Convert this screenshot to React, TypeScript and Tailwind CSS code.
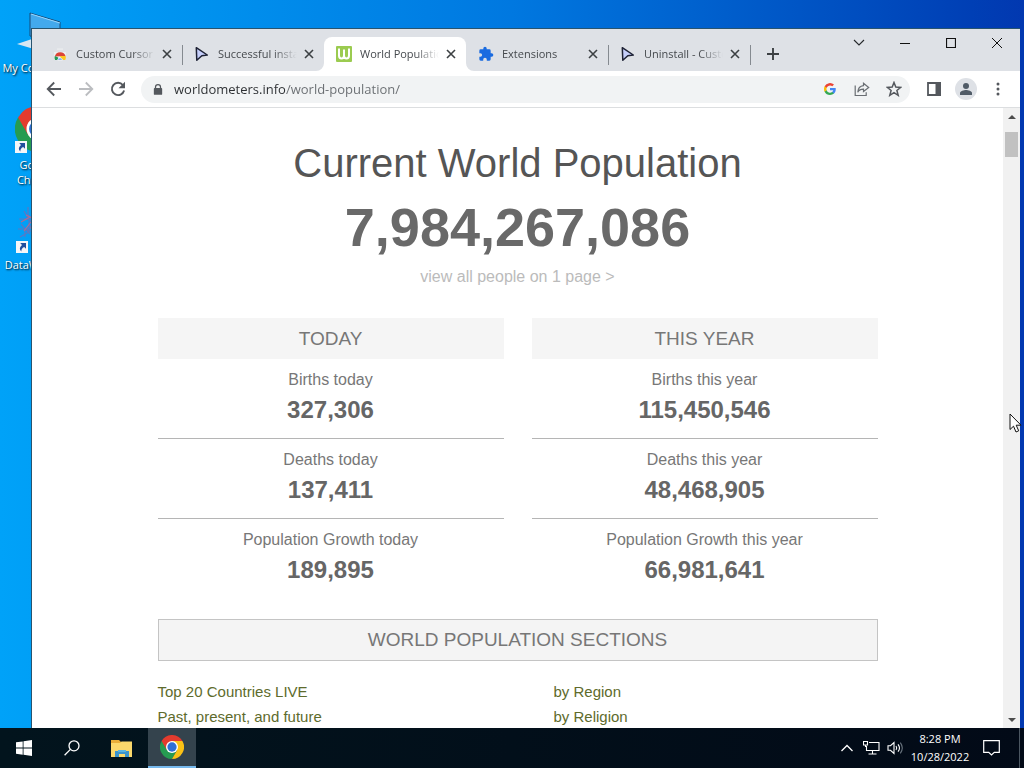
import type { ReactNode } from "react";

function ChromeLogo({ className }: { className: string }) {
  return (
    <svg viewBox="0 0 48 48" className={className} aria-hidden="true">
      <path d="M3.2 12A24 24 0 0 0 24 48L34.4 30 24 24Z" fill="#269b51" />
      <path d="M24 12H44.8A24 24 0 0 1 24 48L34.4 30Z" fill="#fbc116" />
      <path d="M3.2 12 13.6 30 24 24 24 12 44.8 12A24 24 0 0 0 3.2 12Z" fill="#e33b2e" />
      <circle cx="24" cy="24" r="12" fill="#fff" />
      <circle cx="24" cy="24" r="9.3" fill="#2f6fd6" />
    </svg>
  );
}

function StoreIcon() {
  return (
    <svg viewBox="0 0 16 16" className="h-4 w-4 shrink-0">
      <path d="M5 2.500h6v1.200H5z" fill="#eceef0" />
      <path d="M2 6h12v8H2z" fill="#eceef0" />
      <path d="M2.800 10.500A5.600 5.600 0 0 1 13.600 10.300H8Z" fill="#dc4437" />
      <path d="M2.800 10A5.600 5.600 0 0 0 3 14H6.200V11.500Z" fill="#249a55" />
      <path d="M8 10h5.600a5.600 5.600 0 0 1-.2 4H9.600Z" fill="#fbc722" />
      <path d="M5.600 14a2.500 2.500 0 0 1 4.900 0Z" fill="#4285f4" stroke="#fff" strokeWidth=".7" />
    </svg>
  );
}

function PointerIcon() {
  return (
    <svg viewBox="0 0 16 16" className="h-4 w-4 shrink-0">
      <path d="M2.300 1.700 13.300 9 7.800 9.700 2.800 14.300Z" fill="#c5cefa" stroke="#1d2134" strokeWidth="1.500" strokeLinejoin="round" />
    </svg>
  );
}

function WorldometerIcon() {
  return (
    <svg viewBox="0 0 16 16" className="h-4 w-4 shrink-0">
      <rect width="16" height="16" rx="1" fill="#9bcb50" />
      <path d="M3 2.500v7q0 3 2.500 3T8 9.500V3.500v6q0 3 2.500 3T13 9.500v-7" fill="none" stroke="#fff" strokeWidth="2" />
    </svg>
  );
}

function PuzzleIcon() {
  return (
    <svg viewBox="0 0 24 24" className="h-4 w-4 shrink-0">
      <path
        fill="#1a6be0"
        d="M20.500 11H19V7a2 2 0 0 0-2-2h-4V3.500a2.500 2.500 0 0 0-5 0V5H4a2 2 0 0 0-2 2v3.800h1.500a2.700 2.700 0 0 1 0 5.400H2V20a2 2 0 0 0 2 2h3.800v-1.500a2.700 2.700 0 0 1 5.400 0V22H17a2 2 0 0 0 2-2v-4h1.500a2.500 2.500 0 0 0 0-5Z"
      />
    </svg>
  );
}

type TabInfo = { title: string; icon: ReactNode; active?: boolean; divider?: boolean };

const tabs: TabInfo[] = [
  { title: "Custom Cursor", icon: <StoreIcon />, divider: true },
  { title: "Successful installation", icon: <PointerIcon /> },
  { title: "World Population Clock", icon: <WorldometerIcon />, active: true },
  { title: "Extensions", icon: <PuzzleIcon />, divider: true },
  { title: "Uninstall - Custom Cursor", icon: <PointerIcon />, divider: true },
];

function Tab({ title, icon, active, divider }: TabInfo) {
  return (
    <div className={active ? "relative flex h-[34px] w-[142px] items-center rounded-t-lg bg-white pr-[7px] pl-3" : "relative flex h-[34px] w-[142px] items-center pr-[7px] pl-3"}>
      {active && (
        <>
          <svg viewBox="0 0 8 8" className="absolute bottom-0 -left-2 h-2 w-2"><path d="M8 0v8H0a8 8 0 0 0 8-8" fill="#fff" /></svg>
          <svg viewBox="0 0 8 8" className="absolute -right-2 bottom-0 h-2 w-2"><path d="M0 0v8h8a8 8 0 0 1-8-8" fill="#fff" /></svg>
        </>
      )}
      {icon}
      <button className="ml-2 min-w-0 flex-1 overflow-hidden mask-r-from-70% text-left text-[11px] leading-4 whitespace-nowrap text-[#45494d]">{title}</button>
      <button aria-label={`Close ${title}`} className="ml-1 flex h-4 w-4 shrink-0 items-center justify-center">
        <svg viewBox="0 0 10 10" className="h-[10px] w-[10px]"><path d="m1 1 8 8M9 1 1 9" stroke="#3c4043" strokeWidth="1.600" /></svg>
      </button>
      {divider && <span className="absolute top-2 -right-px h-5 w-px bg-[#858a90]" />}
    </div>
  );
}

function TabStrip() {
  return (
    <div className="flex h-[42px] shrink-0 items-end bg-[#dee1e6] pl-2">
      {tabs.map((t) => <Tab key={t.title} {...t} />)}
      <button aria-label="New tab" className="ml-2 flex h-[34px] w-[30px] items-center justify-center">
        <svg viewBox="0 0 12 12" className="h-3 w-3"><path d="M6 0v12M0 6h12" stroke="#3c4043" strokeWidth="1.900" /></svg>
      </button>
      <div className="ml-auto flex h-full items-start">
        <button aria-label="Search tabs" className="flex h-7 w-[46px] items-center justify-center">
          <svg viewBox="0 0 12 12" className="h-3 w-3"><path d="m1 3 5 5 5-5" fill="none" stroke="#25282b" strokeWidth="1.100" /></svg>
        </button>
        <button aria-label="Minimize" className="flex h-7 w-[46px] items-center justify-center">
          <svg viewBox="0 0 10 10" className="h-[10px] w-[10px]"><path d="M0 5.500h10" stroke="#111" strokeWidth="1" /></svg>
        </button>
        <button aria-label="Maximize" className="flex h-7 w-[46px] items-center justify-center">
          <svg viewBox="0 0 10 10" className="h-[10px] w-[10px]"><path d="M.5.5h9v9h-9z" fill="none" stroke="#111" strokeWidth="1.200" /></svg>
        </button>
        <button aria-label="Close window" className="flex h-7 w-[46px] items-center justify-center">
          <svg viewBox="0 0 10 10" className="h-[10px] w-[10px]"><path d="m0 0 10 10M10 0 0 10" stroke="#111" strokeWidth="1" /></svg>
        </button>
      </div>
    </div>
  );
}

const iconButton = "flex h-7 w-8 shrink-0 items-center justify-center";

function Toolbar() {
  return (
    <div className="flex h-[37px] shrink-0 items-center border-b border-[#dcdee0] bg-white px-[6px]">
      <button aria-label="Back" className={iconButton}>
        <svg viewBox="0 0 16 16" className="h-4 w-4"><path d="M15 8H2M8.200 1.500 1.700 8l6.500 6.500" fill="none" stroke="#54585d" strokeWidth="1.800" /></svg>
      </button>
      <button aria-label="Forward" className={iconButton}>
        <svg viewBox="0 0 16 16" className="h-4 w-4"><path d="M1 8h13M7.800 1.500 14.300 8l-6.500 6.500" fill="none" stroke="#bbbdc0" strokeWidth="1.800" /></svg>
      </button>
      <button aria-label="Reload" className={iconButton}>
        <svg viewBox="0 0 16 16" className="h-4 w-4">
          <path d="M12.900 4A6.200 6.200 0 1 0 14.100 9.500" fill="none" stroke="#54585d" strokeWidth="1.900" />
          <path d="M15 .8v6.500H8.500Z" fill="#54585d" />
        </svg>
      </button>
      <div className="ml-[7px] flex h-[27px] min-w-0 flex-1 items-center rounded-full bg-[#f1f3f4] pl-3">
        <svg viewBox="0 0 12 14" className="h-[13px] w-[10px] shrink-0">
          <path d="M3 6V4a3 3 0 0 1 6 0v2" fill="none" stroke="#54585d" strokeWidth="1.500" />
          <rect x="1" y="5.300" width="10" height="8" rx="1" fill="#54585d" />
        </svg>
        <label htmlFor="address" className="sr-only">Address</label>
        <input id="address" type="text" defaultValue="worldometers.info/world-population/" className="ml-[11px] h-6 min-w-0 flex-1 bg-linear-to-r from-[#2b2e31] from-[112px] to-[#686c70] to-[112px] bg-clip-text text-[13px] leading-6 text-transparent outline-none" />
        <button aria-label="Search with Google" className={iconButton}>
          <svg viewBox="0 0 24 24" className="h-3 w-3">
            <path fill="#4285F4" d="M23.500 12.300c0-.8-.1-1.600-.2-2.300H12v4.500h6.500a5.600 5.600 0 0 1-2.400 3.600v3h3.900c2.300-2.100 3.500-5.200 3.500-8.800Z" />
            <path fill="#34A853" d="M12 24c3.200 0 6-1.100 8-2.900l-3.900-3a7.200 7.200 0 0 1-10.800-3.800h-4v3.100A12 12 0 0 0 12 24Z" />
            <path fill="#FBBC05" d="M5.300 14.300a7.200 7.200 0 0 1 0-4.600V6.600h-4a12 12 0 0 0 0 10.800Z" />
            <path fill="#EA4335" d="M12 4.800c1.800 0 3.300.6 4.600 1.800L20 3.200A12 12 0 0 0 1.300 6.600l4 3.100A7.200 7.200 0 0 1 12 4.800Z" />
          </svg>
        </button>
        <button aria-label="Share" className={iconButton}>
          <svg viewBox="0 0 16 16" className="h-4 w-4" fill="none" stroke="#6a6e73" strokeWidth="1.200">
            <path d="M1.200 4.500v10h11v-3.200" />
            <path d="M9.500 2.200 14.700 6.500 9.500 10.500V8.200C6.500 8.200 4.800 9.200 3.800 11.300 4 7.500 6 4.900 9.500 4.600Z" />
          </svg>
        </button>
        <button aria-label="Bookmark" className={iconButton}>
          <svg viewBox="0 0 16 16" className="h-4 w-4"><path d="m8 1.500 1.800 4.600 4.900.3-3.800 3.100 1.300 4.800L8 11.600l-4.200 2.700 1.300-4.800-3.800-3.100 4.900-.3Z" fill="none" stroke="#54585d" strokeWidth="1.500" /></svg>
        </button>
      </div>
      <button aria-label="Side panel" className="ml-2 flex h-7 w-8 shrink-0 items-center justify-center">
        <svg viewBox="0 0 14 14" className="h-[14px] w-[14px]"><path d="M1 1h12v12H1z" fill="none" stroke="#54585d" strokeWidth="1.800" /><path d="M8.500 0H14v14H8.500z" fill="#54585d" /></svg>
      </button>
      <button aria-label="Profile" className={iconButton}>
        <span className="flex h-[22px] w-[22px] items-center justify-center rounded-full bg-[#dee1e6]">
          <svg viewBox="0 0 14 14" className="h-[14px] w-[14px]" fill="#505b67"><circle cx="7" cy="4" r="3" /><path d="M1 13v-2c0-2 4-3 6-3s6 1 6 3v2Z" /></svg>
        </span>
      </button>
      <button aria-label="Menu" className={iconButton}>
        <svg viewBox="0 0 4 14" className="h-[14px] w-1" fill="#54585d"><circle cx="2" cy="2" r="1.500" /><circle cx="2" cy="7" r="1.500" /><circle cx="2" cy="12" r="1.500" /></svg>
      </button>
    </div>
  );
}

const columns = [
  { heading: "TODAY", rows: [["Births today", "327,306"], ["Deaths today", "137,411"], ["Population Growth today", "189,895"]] },
  { heading: "THIS YEAR", rows: [["Births this year", "115,450,546"], ["Deaths this year", "48,468,905"], ["Population Growth this year", "66,981,641"]] },
];

function Page() {
  return (
    <main className="min-w-0 flex-1 overflow-hidden bg-white px-6 pt-8 font-['Liberation_Sans',Arial,sans-serif] text-[#777]">
      <div className="mx-auto max-w-[720px]">
        <h1 className="text-center text-[40px] leading-[46px] text-[#555]">Current World Population</h1>
        <p className="mt-[9px] text-center text-[54px] leading-[64px] font-bold text-[#696969]">7,984,267,086</p>
        <p className="mt-2 text-center leading-5"><a href="#people" className="text-[16px] text-[#bbb]">view all people on 1 page &gt;</a></p>
        <div className="mt-[31px] grid grid-cols-2 gap-7">
          {columns.map((c) => (
            <section key={c.heading}>
              <h2 className="h-[41px] bg-[#f5f5f5] text-center text-[19px] leading-[41px]">{c.heading}</h2>
              {c.rows.map(([label, value]) => (
                <div key={label} className="h-20 border-b border-[#b5b5b5] pt-2 text-center last:border-0">
                  <p className="text-[16px] leading-[26px]">{label}</p>
                  <p className="text-[24px] leading-[34px] font-bold text-[#666]">{value}</p>
                </div>
              ))}
            </section>
          ))}
        </div>
        <h2 className="mt-5 h-[42px] border border-[#c4c4c4] bg-[#f4f4f4] text-center text-[19px] leading-10">WORLD POPULATION SECTIONS</h2>
        <nav className="mt-[18px] grid grid-cols-[396px_1fr] text-[15px] leading-[25px] text-[#5e6b2c]">
          <a href="#live">Top 20 Countries LIVE</a>
          <a href="#region">by Region</a>
          <a href="#past">Past, present, and future</a>
          <a href="#religion">by Religion</a>
        </nav>
      </div>
    </main>
  );
}

function ScrollBar() {
  return (
    <div className="flex w-[17px] shrink-0 flex-col items-center bg-[#f1f1f1]">
      <button aria-label="Scroll up" className="flex h-[17px] w-full items-center justify-center"><svg viewBox="0 0 8 4" className="h-1 w-2"><path d="m0 4 4-4 4 4Z" fill="#4c4c4c" /></svg></button>
      <div className="mt-[7px] h-[25px] w-[13px] bg-[#c1c1c1]" />
      <button aria-label="Scroll down" className="mt-auto flex h-[17px] w-full items-center justify-center"><svg viewBox="0 0 8 4" className="h-1 w-2"><path d="m0 0 4 4 4-4Z" fill="#4c4c4c" /></svg></button>
    </div>
  );
}

function ShortcutBadge() {
  return (
    <svg viewBox="0 0 12 12" className="absolute bottom-0 left-0 h-3 w-3">
      <path d="M0 0h12v12H0z" fill="#f5f6f8" />
      <path d="M4.200 2H10v5.800L8.200 6Q5 7.500 5.400 10.500 2 7.200 6 3.900Z" fill="#234f9d" />
    </svg>
  );
}

const iconLabel = "mt-1 text-center text-[11px] leading-[15px] whitespace-nowrap text-white text-shadow-[1px_1px_2px_#000]";

function DesktopIcons() {
  return (
    <div className="flex w-[75px] flex-col items-center">
      <a href="#computer" className="flex h-[97px] flex-col items-center pt-3">
        <svg viewBox="0 0 42 44" className="h-11 w-[42px] overflow-visible">
          <path d="M13 1 43 10V30L13 24Z" fill="#43a9ed" stroke="#164a78" strokeWidth="1" />
          <path d="M14 2 43 11" stroke="#9ad6fb" strokeWidth="1" />
          <path d="m0 32 15-5 26 6-14 7Z" fill="#d6e6f2" />
        </svg>
        <span className={iconLabel}>My Computer</span>
      </a>
      <a href="#chrome" className="flex h-24 flex-col items-center pt-2">
        <span className="relative"><ChromeLogo className="h-12 w-[46px]" /><ShortcutBadge /></span>
        <span className={iconLabel}>Google<br />Chrome</span>
      </a>
      <a href="#data" className="flex h-24 flex-col items-center pt-3">
        <span className="relative">
          <svg viewBox="0 0 44 48" className="h-12 w-11" fill="none" stroke="#5a78c4" strokeWidth="1.200">
            <path d="M3 14h10l7 8M8 6l5 9v12L4 32M12 2v8l8 8M2 24h10l8-8M13 20l8 8M9 32v-8l11 4M5 19l9 10" />
            <path d="M5 17l9-5M8 26l7-9M14 23h8M10 10l8 4" stroke="#b06a90" />
          </svg>
          <ShortcutBadge />
        </span>
        <span className={iconLabel}>DataWindow</span>
      </a>
    </div>
  );
}

function Taskbar() {
  return (
    <footer className="flex h-10 shrink-0 items-center bg-linear-to-r from-[#02141d] to-[#020a17] text-white">
      <button aria-label="Start" className="flex h-10 w-12 items-center justify-center">
        <svg viewBox="0 0 16 16" className="h-4 w-4" fill="#fff"><path d="m0 2.300 6.700-.9v6.200H0ZM7.500 1.300 16 0v7.600H7.500ZM0 8.400h6.700v6.300L0 13.800ZM7.500 8.400H16V16l-8.500-1.200Z" /></svg>
      </button>
      <button aria-label="Search" className="flex h-10 w-12 items-center justify-center">
        <svg viewBox="0 0 16 16" className="h-4 w-4" fill="none" stroke="#fff" strokeWidth="1.300"><circle cx="10" cy="5.800" r="5" /><path d="M6.400 9.400.6 15.300" /></svg>
      </button>
      <button aria-label="File Explorer" className="flex h-10 w-[52px] items-center justify-center">
        <svg viewBox="0 0 22 19" className="h-[19px] w-[22px]">
          <path d="M0 1h8l2 2h11v15H0Z" fill="#e9ae3a" /><path d="M0 4h9l1.500-1.500H21V18H0Z" fill="#fbd86c" />
          <path d="M4 18v-6h14v6h-4v-3H8v3Z" fill="#3b94cc" /><path d="M7 11h8v2H7z" fill="#58b3e2" />
        </svg>
      </button>
      <button aria-label="Google Chrome" className="flex h-10 w-12 items-center justify-center border-b-2 border-[#76b9ed] bg-[#34434d]"><ChromeLogo className="h-6 w-6" /></button>
      <div className="ml-auto flex h-10 items-center">
        <button aria-label="Hidden icons" className="flex h-10 w-6 items-center justify-center"><svg viewBox="0 0 12 8" className="h-2 w-3"><path d="m.5 7 5.500-5.500L11.500 7" fill="none" stroke="#fff" strokeWidth="1.300" /></svg></button>
        <button aria-label="Network" className="flex h-10 w-6 items-center justify-center">
          <svg viewBox="0 0 17 14" className="h-[14px] w-[17px]" fill="none" stroke="#fff" strokeWidth="1.100"><path d="M6 1.500h10v8H3.500V5M9.500 9.500V13M5.500 13h8M.5.5h4v3.500h-4ZM2.500 4v2" /></svg>
        </button>
        <button aria-label="Volume" className="flex h-10 w-6 items-center justify-center">
          <svg viewBox="0 0 17 14" className="h-[14px] w-[17px]" fill="none" stroke="#fff" strokeWidth="1.100"><path d="M1 4.700h2.500L7 1.500v11L3.500 9.300H1Z" /><path d="M9 5q1.500 2 0 4M11 3.300q3 3.700 0 7.400" /><path d="M13.300 1.700q4 5.300 0 10.600" stroke="#68737d" /></svg>
        </button>
        <time className="w-[66px] text-center text-[11px] leading-[18px] whitespace-nowrap">8:28 PM<br />10/28/2022</time>
        <button aria-label="Notifications" className="flex h-10 w-9 items-center justify-center">
          <svg viewBox="0 0 17 16" className="h-4 w-[17px]"><path d="M.7.7h15.600v11.600h-5L8.500 15l-2.800-2.700h-5Z" fill="none" stroke="#fff" strokeWidth="1.200" /></svg>
        </button>
        <button aria-label="Show desktop" className="ml-[10px] h-10 w-[5px] border-l border-[#4b5661]" />
      </div>
    </footer>
  );
}

export default function App() {
  return (
    <div className="flex h-screen flex-col overflow-hidden font-['Open_Sans','Noto_Sans',sans-serif]">
      <div className="relative min-h-0 flex-1 overflow-hidden bg-linear-to-r from-[#00a2f8] via-[#0078e0] via-50% to-[#0238b0]">
        <DesktopIcons />
        <div className="absolute top-7 right-1 bottom-0 left-[31px] flex flex-col border-t border-l border-[#28546f] bg-white">
          <TabStrip />
          <Toolbar />
          <div className="flex min-h-0 flex-1"><Page /><ScrollBar /></div>
        </div>
        <svg viewBox="0 0 13 20" className="absolute top-[413px] right-[2px] h-5 w-[13px]"><path d="M1 1v15.500l3.500-3.300L7 19l2.700-1.200-2.500-5.600H12Z" fill="#fff" stroke="#111" strokeWidth="1" /></svg>
      </div>
      <Taskbar />
    </div>
  );
}
